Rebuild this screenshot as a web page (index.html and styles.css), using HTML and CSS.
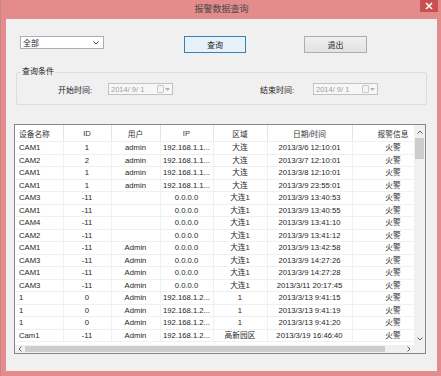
FILE: index.html
```html
<!DOCTYPE html>
<html lang="zh-CN">
<head>
<meta charset="UTF-8">
<title>报警数据查询</title>
<link rel="stylesheet" href="styles.css">
</head>
<body>
<div class="window">
    <div class="titlebar">
        <span class="title">报警数据查询</span>
        <span class="close">
            <svg width="8" height="8" viewBox="0 0 8 8"><path d="M1 1L7 7M7 1L1 7" stroke="#fff" stroke-width="1.6"/></svg>
        </span>
    </div>
    <div class="content">
        <div class="toolbar">
            <div class="combo">
                <span>全部</span>
                <svg width="6" height="4" viewBox="0 0 6 4"><path d="M0.5 0.5L3 3L5.5 0.5" fill="none" stroke="#444" stroke-width="1"/></svg>
            </div>
            <button class="btn btn-default">查询</button>
            <button class="btn btn-exit">退出</button>
        </div>

        <fieldset class="group">
            <legend>查询条件</legend>
            <div class="cond-row">
                <label class="cond-label start">开始时间:</label>
                <div class="datepick">
                    <span>2014/ 9/ 1</span>
                    <span class="dp-icons">
                        <span class="dp-box"></span>
                        <svg width="5" height="3" viewBox="0 0 5 3"><path d="M0 0H5L2.5 3Z" fill="#b4b4b4"/></svg>
                    </span>
                </div>
                <label class="cond-label end">结束时间:</label>
                <div class="datepick">
                    <span>2014/ 9/ 1</span>
                    <span class="dp-icons">
                        <span class="dp-box"></span>
                        <svg width="5" height="3" viewBox="0 0 5 3"><path d="M0 0H5L2.5 3Z" fill="#b4b4b4"/></svg>
                    </span>
                </div>
            </div>
        </fieldset>

        <div class="listview">
            <div class="list-body">
                <table class="grid">
                    <colgroup>
                        <col style="width:48px"><col style="width:48px"><col style="width:49px"><col style="width:53px"><col style="width:54px"><col style="width:85px"><col style="width:82px">
                    </colgroup>
                    <thead>
                        <tr><th class="left">设备名称</th><th>ID</th><th>用户</th><th>IP</th><th>区域</th><th>日期/时间</th><th>报警信息</th></tr>
                    </thead>
                    <tbody>
                        <tr><td class="left">CAM1</td><td>1</td><td>admin</td><td>192.168.1.1...</td><td>大连</td><td>2013/3/6 12:10:01</td><td>火警</td></tr>
                        <tr><td class="left">CAM2</td><td>2</td><td>admin</td><td>192.168.1.1...</td><td>大连</td><td>2013/3/7 12:10:01</td><td>火警</td></tr>
                        <tr><td class="left">CAM1</td><td>1</td><td>admin</td><td>192.168.1.1...</td><td>大连</td><td>2013/3/8 12:10:01</td><td>火警</td></tr>
                        <tr><td class="left">CAM1</td><td>1</td><td>admin</td><td>192.168.1.1...</td><td>大连</td><td>2013/3/9 23:55:01</td><td>火警</td></tr>
                        <tr><td class="left">CAM3</td><td>-11</td><td></td><td>0.0.0.0</td><td>大连1</td><td>2013/3/9 13:40:53</td><td>火警</td></tr>
                        <tr><td class="left">CAM1</td><td>-11</td><td></td><td>0.0.0.0</td><td>大连1</td><td>2013/3/9 13:40:55</td><td>火警</td></tr>
                        <tr><td class="left">CAM4</td><td>-11</td><td></td><td>0.0.0.0</td><td>大连1</td><td>2013/3/9 13:41:10</td><td>火警</td></tr>
                        <tr><td class="left">CAM2</td><td>-11</td><td></td><td>0.0.0.0</td><td>大连1</td><td>2013/3/9 13:41:12</td><td>火警</td></tr>
                        <tr><td class="left">CAM1</td><td>-11</td><td>Admin</td><td>0.0.0.0</td><td>大连1</td><td>2013/3/9 13:42:58</td><td>火警</td></tr>
                        <tr><td class="left">CAM3</td><td>-11</td><td>Admin</td><td>0.0.0.0</td><td>大连1</td><td>2013/3/9 14:27:26</td><td>火警</td></tr>
                        <tr><td class="left">CAM1</td><td>-11</td><td>Admin</td><td>0.0.0.0</td><td>大连1</td><td>2013/3/9 14:27:28</td><td>火警</td></tr>
                        <tr><td class="left">CAM3</td><td>-11</td><td>Admin</td><td>0.0.0.0</td><td>大连1</td><td>2013/3/11 20:17:45</td><td>火警</td></tr>
                        <tr><td class="left">1</td><td>0</td><td>Admin</td><td>192.168.1.2...</td><td>1</td><td>2013/3/13 9:41:15</td><td>火警</td></tr>
                        <tr><td class="left">1</td><td>0</td><td>Admin</td><td>192.168.1.2...</td><td>1</td><td>2013/3/13 9:41:19</td><td>火警</td></tr>
                        <tr><td class="left">1</td><td>0</td><td>Admin</td><td>192.168.1.2...</td><td>1</td><td>2013/3/13 9:41:20</td><td>火警</td></tr>
                        <tr><td class="left">Cam1</td><td>-11</td><td>Admin</td><td>192.168.1.2...</td><td>高新园区</td><td>2013/3/19 16:46:40</td><td>火警</td></tr>
                    </tbody>
                </table>
            </div>
            <div class="vscroll">
                <span class="arrow">
                    <svg width="6" height="4" viewBox="0 0 6 4"><path d="M0.5 3.5L3 1L5.5 3.5" fill="none" stroke="#606060" stroke-width="1"/></svg>
                </span>
                <span class="vthumb"></span>
                <span class="vtrack"></span>
                <span class="arrow">
                    <svg width="6" height="4" viewBox="0 0 6 4"><path d="M0.5 0.5L3 3L5.5 0.5" fill="none" stroke="#606060" stroke-width="1"/></svg>
                </span>
            </div>
            <div class="hscroll">
                <span class="arrow">
                    <svg width="4" height="6" viewBox="0 0 4 6"><path d="M3.5 0.5L1 3L3.5 5.5" fill="none" stroke="#606060" stroke-width="1"/></svg>
                </span>
                <span class="hthumb"></span>
                <span class="htrack"></span>
                <span class="arrow">
                    <svg width="4" height="6" viewBox="0 0 4 6"><path d="M0.5 0.5L3 3L0.5 5.5" fill="none" stroke="#606060" stroke-width="1"/></svg>
                </span>
            </div>
            <div class="corner"></div>
        </div>
    </div>
</div>
</body>
</html>
```

FILE: styles.css
```css
body {
    margin: 0;
    font-family: "Liberation Sans", "Noto Sans CJK SC", sans-serif;
    font-size: 7.7px;
    color: #1e1e1e;
    background-color: #9aa89a;
}

.window {
    width: 441px;
    height: 376px;
    box-sizing: border-box;
    background-color: #e48b8b;
    border-left: 1px solid #c98585;
    padding: 0 4px 5px 5px;
    display: flex;
    flex-direction: column;
}

.titlebar {
    height: 19px;
    display: flex;
    justify-content: center;
    align-items: flex-start;
    position: relative;
}

.title {
    font-size: 9px;
    line-height: 19px;
    color: #4a4a4a;
}

.close {
    position: absolute;
    right: -1px;
    top: 0;
    width: 18px;
    height: 12px;
    background-color: #c75050;
    display: flex;
    align-items: center;
    justify-content: center;
}

.content {
    flex: 1;
    background-color: #f0f0f0;
    display: flex;
    flex-direction: column;
}

.toolbar {
    display: flex;
    align-items: flex-start;
    margin-top: 17px;
    height: 17px;
}

.combo {
    margin-left: 14px;
    width: 84px;
    height: 13px;
    box-sizing: border-box;
    border: 1px solid #abadb3;
    background-color: #fff;
    display: flex;
    align-items: center;
    justify-content: space-between;
    padding: 0 4px 0 2px;
    font-size: 8px;
}

.btn {
    height: 17px;
    box-sizing: border-box;
    font-family: inherit;
    font-size: 8px;
    color: #1e1e1e;
    padding: 0;
    border-radius: 0;
}

.btn-default {
    margin-left: 80px;
    width: 62px;
    background-color: #e5f1fb;
    border: 1px solid #3c7fb1;
}

.btn-exit {
    margin-left: 58px;
    width: 63px;
    background: linear-gradient(#f0f0f0, #e2e2e2);
    border: 1px solid #adadad;
}

.group {
    margin: 14px 0 0 10px;
    width: 411px;
    height: 38px;
    box-sizing: border-box;
    border: 1px solid #dcdcdc;
    border-radius: 2px;
    padding: 0;
}

.group legend {
    font-size: 8px;
    line-height: 10px;
    padding: 0 1px;
    margin-left: 4px;
    color: #1e1e1e;
}

.cond-row {
    display: flex;
    align-items: center;
    margin-top: 6px;
    height: 12px;
}

.cond-label {
    font-size: 8px;
    width: 50px;
}

.cond-label.start {
    margin-left: 41px;
}

.cond-label.end {
    margin-left: 87px;
    width: 53px;
}

.datepick {
    width: 65px;
    height: 12px;
    box-sizing: border-box;
    border: 1px solid #c2c2c2;
    background-color: #f7f7f7;
    color: #a0a0a0;
    display: flex;
    align-items: center;
    justify-content: space-between;
    padding: 0 2px;
    font-size: 7.5px;
}

.dp-icons {
    display: flex;
    align-items: center;
    gap: 1px;
}

.dp-box {
    width: 5px;
    height: 6px;
    border: 1px solid #c8c8c8;
    border-radius: 1px;
    background-color: #f4f4f4;
}

.listview {
    margin: 19px 0 0 8px;
    width: 412px;
    height: 230px;
    box-sizing: border-box;
    border: 1px solid #828790;
    background-color: #fff;
    display: grid;
    grid-template-columns: 399px 11px;
    grid-template-rows: 220px 8px;
}

.list-body {
    overflow: hidden;
}

.grid {
    table-layout: fixed;
    border-collapse: collapse;
    width: 419px;
}

.grid th,
.grid td {
    text-align: center;
    white-space: nowrap;
    overflow: hidden;
    padding: 0;
    font-weight: normal;
}

.grid th {
    height: 16px;
    color: #333;
    border-right: 1px solid #e5e5e5;
    border-bottom: 1px solid #f0f0f0;
}

.grid td {
    height: 11.5px;
    line-height: 11.5px;
    border-right: 1px solid #f0f0f0;
    border-bottom: 1px solid #f0f0f0;
}

.grid .left {
    text-align: left;
    padding-left: 4px;
}

.vscroll {
    grid-row: 1;
    grid-column: 2;
    background-color: #f0f0f0;
    display: flex;
    flex-direction: column;
}

.vscroll .arrow {
    height: 13px;
    display: flex;
    align-items: center;
    justify-content: center;
}

.vthumb {
    height: 21px;
    margin: 0 1px;
    background-color: #cdcdcd;
}

.vtrack {
    flex: 1;
}

.hscroll {
    grid-row: 2;
    grid-column: 1;
    background-color: #f0f0f0;
    display: flex;
}

.hscroll .arrow {
    width: 10px;
    display: flex;
    align-items: center;
    justify-content: center;
}

.hthumb {
    width: 360px;
    margin: 1px 0;
    background-color: #cdcdcd;
}

.htrack {
    flex: 1;
}

.corner {
    grid-row: 2;
    grid-column: 2;
    background-color: #f0f0f0;
}
```
